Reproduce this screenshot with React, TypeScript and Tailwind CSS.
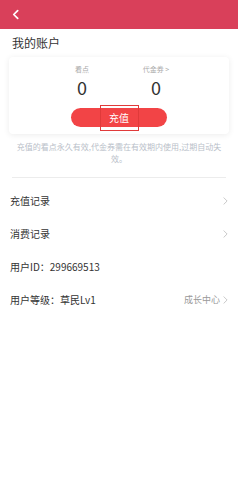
import React from 'react';

const font = { fontFamily: '"Noto Sans CJK SC", "Noto Sans", sans-serif' };

const Chevron: React.FC<{ className?: string }> = ({ className }) => (
  <svg viewBox="0 0 6 10" className={className} fill="none" stroke="currentColor" strokeWidth="1" strokeLinecap="round" strokeLinejoin="round">
    <path d="M1 1l4 4-4 4" />
  </svg>
);

const Row: React.FC<{ label: string; right?: React.ReactNode; arrow?: boolean }> = ({ label, right, arrow }) => (
  <div className="flex items-center justify-between h-[33px] pl-[10px] pr-[10px]">
    <span className="text-[10px] text-[#333]">{label}</span>
    <div className="flex items-center gap-[3px]">
      {right}
      {arrow && <Chevron className="w-[5px] h-[8px] text-[#bbb]" />}
    </div>
  </div>
);

export default function App() {
  return (
    <div className="w-[238px] h-[500px] bg-white" style={font}>
      <header className="h-[29px] bg-[#d9405a] flex items-center pl-[12px]">
        <svg viewBox="0 0 8 12" className="w-[7px] h-[11px]" fill="none" stroke="white" strokeWidth="2" strokeLinecap="round" strokeLinejoin="round">
          <path d="M6.5 1.5L2 6l4.5 4.5" />
        </svg>
      </header>

      <h1 className="text-[12px] leading-none text-[#333] pl-[12px] pt-[8px]">我的账户</h1>

      <div className="mx-[9px] mt-[8px] rounded-[4px] bg-white shadow-[0_1px_6px_rgba(0,0,0,0.08)] pt-[9px] pb-[7px]">
        <div className="flex justify-center">
          <div className="w-[74px] flex flex-col items-center">
            <span className="text-[7px] leading-none text-[#aaa]">看点</span>
            <span className="text-[18px] leading-none text-[#333] mt-[5px]">0</span>
          </div>
          <div className="w-[74px] flex flex-col items-center">
            <span className="text-[7px] leading-none text-[#aaa]">代金券 &gt;</span>
            <span className="text-[18px] leading-none text-[#333] mt-[5px]">0</span>
          </div>
        </div>
        <div className="flex justify-center mt-[12px]">
          <button className="relative w-[96px] h-[19px] rounded-full bg-[#f24446] text-white text-[10px] leading-none flex items-center justify-center">
            充值
            <span className="absolute left-[29px] top-[-3px] w-[39px] h-[26px] border border-[#e03a3a]" />
          </button>
        </div>
      </div>

      <p className="text-[8px] leading-[12px] text-[#b9c0c9] text-center px-[16px] mt-[7px]">
        充值的看点永久有效,代金券需在有效期内使用,过期自动失效。
      </p>

      <div className="mx-[12px] mt-[12px] h-px bg-[#ececec]" />

      <div className="mt-[6px]">
        <Row label="充值记录" arrow />
        <Row label="消费记录" arrow />
        <Row label="用户ID：299669513" />
        <Row label="用户等级：草民Lv1" arrow right={<span className="text-[9px] text-[#999]">成长中心</span>} />
      </div>
    </div>
  );
}
